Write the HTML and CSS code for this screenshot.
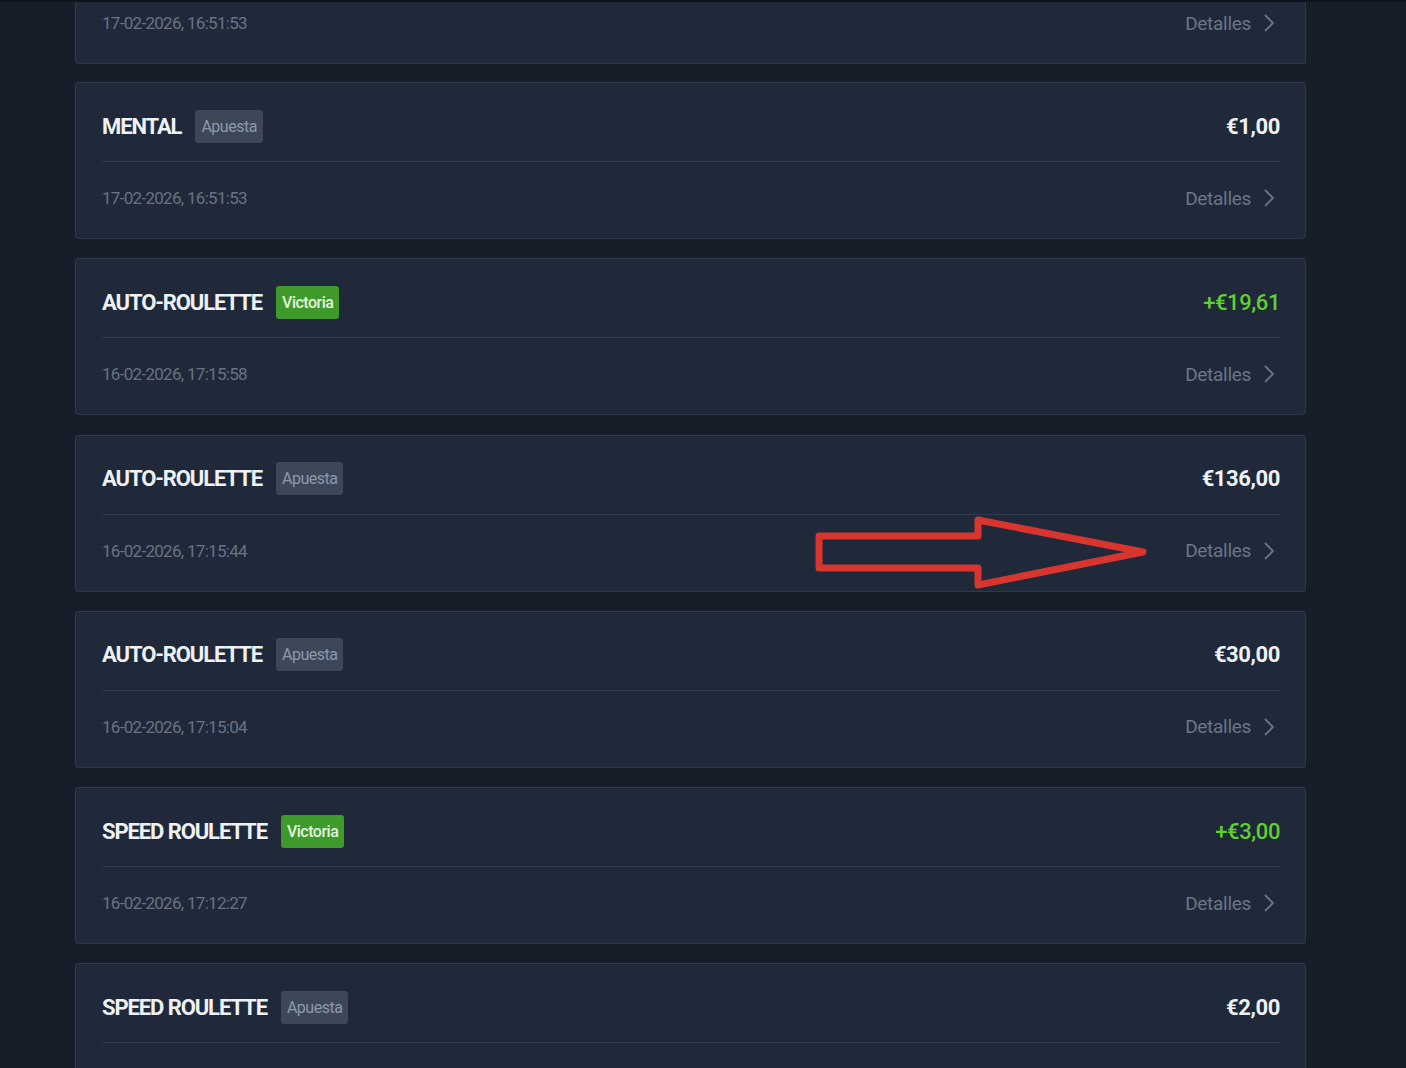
FILE: index.html
```html
<!DOCTYPE html>
<html lang="es">
<head>
  <meta charset="UTF-8">
  <meta name="viewport" content="width=device-width, initial-scale=1.0">
  <title>Historial de apuestas</title>
  <link rel="stylesheet" href="styles.css">
</head>
<body>
  <main class="history">
    <div class="bet-list">

      <!-- scrolled: only the lower half of this card is on screen -->
      <div class="bet-card bet-card-cut">
        <div class="bet-bottom">
          <span class="bet-date">17-02-2026, 16:51:53</span>
          <a class="details" href="#">Detalles <svg viewBox="0 0 14 22" width="14" height="22"><path d="M3 3l8 8-8 8"/></svg></a>
        </div>
      </div>

      <div class="bet-card">
        <div class="bet-top">
          <div class="bet-name">MENTAL <span class="tag tag-bet">Apuesta</span></div>
          <div class="amount">€1,00</div>
        </div>
        <div class="bet-bottom">
          <span class="bet-date">17-02-2026, 16:51:53</span>
          <a class="details" href="#">Detalles <svg viewBox="0 0 14 22" width="14" height="22"><path d="M3 3l8 8-8 8"/></svg></a>
        </div>
      </div>

      <div class="bet-card">
        <div class="bet-top">
          <div class="bet-name">AUTO-ROULETTE <span class="tag tag-win">Victoria</span></div>
          <div class="amount amount-win">+€19,61</div>
        </div>
        <div class="bet-bottom">
          <span class="bet-date">16-02-2026, 17:15:58</span>
          <a class="details" href="#">Detalles <svg viewBox="0 0 14 22" width="14" height="22"><path d="M3 3l8 8-8 8"/></svg></a>
        </div>
      </div>

      <div class="bet-card">
        <div class="bet-top">
          <div class="bet-name">AUTO-ROULETTE <span class="tag tag-bet">Apuesta</span></div>
          <div class="amount">€136,00</div>
        </div>
        <div class="bet-bottom">
          <span class="bet-date">16-02-2026, 17:15:44</span>
          <a class="details" href="#">Detalles <svg viewBox="0 0 14 22" width="14" height="22"><path d="M3 3l8 8-8 8"/></svg></a>
        </div>
      </div>

      <div class="bet-card">
        <div class="bet-top">
          <div class="bet-name">AUTO-ROULETTE <span class="tag tag-bet">Apuesta</span></div>
          <div class="amount">€30,00</div>
        </div>
        <div class="bet-bottom">
          <span class="bet-date">16-02-2026, 17:15:04</span>
          <a class="details" href="#">Detalles <svg viewBox="0 0 14 22" width="14" height="22"><path d="M3 3l8 8-8 8"/></svg></a>
        </div>
      </div>

      <div class="bet-card">
        <div class="bet-top">
          <div class="bet-name">SPEED ROULETTE <span class="tag tag-win">Victoria</span></div>
          <div class="amount amount-win">+€3,00</div>
        </div>
        <div class="bet-bottom">
          <span class="bet-date">16-02-2026, 17:12:27</span>
          <a class="details" href="#">Detalles <svg viewBox="0 0 14 22" width="14" height="22"><path d="M3 3l8 8-8 8"/></svg></a>
        </div>
      </div>

      <div class="bet-card">
        <div class="bet-top">
          <div class="bet-name">SPEED ROULETTE <span class="tag tag-bet">Apuesta</span></div>
          <div class="amount">€2,00</div>
        </div>
      </div>

    </div>
  </main>

  <!-- annotation drawn over the screenshot -->
  <svg class="annotation" viewBox="0 0 1406 1068" width="1406" height="1068">
    <path d="M819 536 H978 V520 L1143 552 L978 585 V568 H819 Z"/>
  </svg>
</body>
</html>
```

FILE: styles.css
```css
* {
  box-sizing: border-box;
}
html, body {
  overflow: hidden;
}
body {
  margin: 0;
  background: #171e29;
  border-top: 2px solid #0f141b;
  font-family: Roboto, "Noto Sans", sans-serif;
  color: #e9edf2;
  height: 1068px;
  position: relative;
}
.history {
  padding-left: 75px;
}
.bet-list {
  width: 1231px;
  display: flex;
  flex-direction: column;
  gap: 19.25px;
}
.bet-card {
  height: 157px;
  flex-shrink: 0;
  background: #1f2939;
  border: 1px solid #2e394b;
  border-radius: 3px;
  padding: 0 25px 0 26px;
}
.bet-card-cut {
  height: 62px;
  border-top: none;
  border-radius: 0 0 3px 3px;
  margin-bottom: -1.25px;
}
.bet-card-cut .bet-bottom {
  height: 61px;
  padding-bottom: 19px;
}
.bet-top {
  display: flex;
  align-items: center;
  justify-content: space-between;
  padding: 26px 0 18px;
  border-bottom: 1px solid #2f3a4c;
  height: 79px;
}
.bet-name {
  display: flex;
  align-items: center;
  font-size: 22px;
  font-weight: 700;
  letter-spacing: -1.1px;
  color: #eef1f5;
}
.tag {
  display: inline-block;
  margin-left: 14px;
  height: 33px;
  line-height: 33px;
  padding: 0 6px;
  border-radius: 3px;
  font-size: 16px;
  font-weight: 400;
  letter-spacing: -0.5px;
}
.tag-bet {
  background: #3c475a;
  color: #8d99aa;
}
.tag-win {
  background: #3e9a2b;
  color: #e4f4de;
  font-weight: 500;
}
.amount {
  font-size: 22px;
  font-weight: 700;
  letter-spacing: -0.4px;
  color: #eef1f5;
}
.amount-win {
  color: #5fd02f;
  font-weight: 500;
}
.bet-bottom {
  display: flex;
  align-items: center;
  justify-content: space-between;
  height: 76px;
  padding-bottom: 4px;
}
.bet-date {
  font-size: 17px;
  letter-spacing: -0.7px;
  color: #687384;
}
.details {
  display: flex;
  align-items: center;
  gap: 11px;
  font-size: 19px;
  letter-spacing: -0.3px;
  color: #6b7687;
  text-decoration: none;
  margin-right: 4px;
}
.details svg {
  fill: none;
  stroke: #6b7687;
  stroke-width: 1.8;
}
.annotation {
  position: absolute;
  left: 0;
  top: -2px;
  pointer-events: none;
}
.annotation path {
  fill: none;
  stroke: #d8352f;
  stroke-width: 7;
  stroke-linejoin: round;
}
```
